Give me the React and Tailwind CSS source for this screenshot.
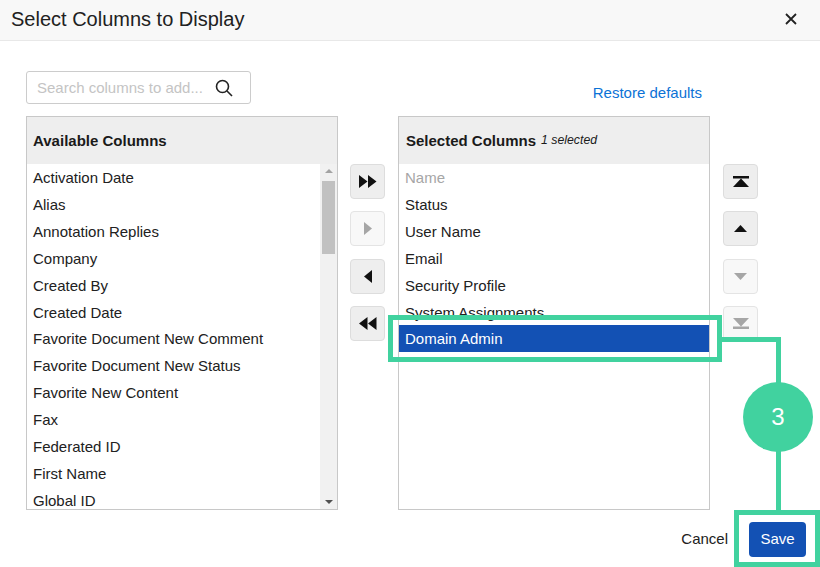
const availableColumns = [
  "Activation Date",
  "Alias",
  "Annotation Replies",
  "Company",
  "Created By",
  "Created Date",
  "Favorite Document New Comment",
  "Favorite Document New Status",
  "Favorite New Content",
  "Fax",
  "Federated ID",
  "First Name",
  "Global ID",
];

const selectedColumns = ["Status", "User Name", "Email", "Security Profile", "System Assignments"];

const icons = {
  addAll: "M0 0 L8.5 6.5 L0 13 Z M9 0 L17.5 6.5 L9 13 Z",
  add: "M0 0 L8 6.5 L0 13 Z",
  remove: "M8 0 L0 6.5 L8 13 Z",
  removeAll: "M8.5 0 L0 6.5 L8.5 13 Z M17.5 0 L9 6.5 L17.5 13 Z",
  top: "M0 0 H16 V2.5 H0 Z M8 2.5 L16 11 H0 Z",
  up: "M6.5 0 L13 7 H0 Z",
  down: "M0 0 H13 L6.5 7 Z",
  bottom: "M0 0 H16 L8 8.5 Z M0 8.5 H16 V11 H0 Z",
};

function MoveButton({ icon, w, h, disabled }) {
  return (
    <button
      className={`flex h-[35px] w-[35px] items-center justify-center rounded border ${
        disabled ? "border-[#e4e4e4] bg-[#f8f8f8]" : "border-[#dddddd] bg-[#eeeeee]"
      }`}
    >
      <svg width={w} height={h} viewBox={`0 0 ${w} ${h}`}>
        <path d={icons[icon]} fill={disabled ? "#a6a6a6" : "#111111"} />
      </svg>
    </button>
  );
}

function PanelHeader({ children, className = "" }) {
  return (
    <div className={`flex h-[47px] items-center bg-[#eeeeee] pt-[2px] text-[15px] font-bold text-[#1a1a1a] ${className}`}>
      {children}
    </div>
  );
}

function Row({ children, className = "" }) {
  return <div className={`flex h-[26.875px] shrink-0 items-center pl-[6px] pt-[2px] ${className}`}>{children}</div>;
}

export default function App() {
  return (
    <div className="relative h-[567px] w-[820px] overflow-hidden bg-white font-['Liberation_Sans',Arial,sans-serif] text-[15px] text-[#212121]">
      {/* header */}
      <div className="flex h-[41px] items-center justify-between border-b border-[#e8e8e8] bg-[#f8f8f8] pb-[3px] pl-[11px] pr-[23px]">
        <h1 className="text-[20px] text-[#212121]">Select Columns to Display</h1>
        <svg width="12" height="12" viewBox="0 0 12 12">
          <path d="M1 1 L11 11 M11 1 L1 11" stroke="#222222" strokeWidth="1.8" fill="none" />
        </svg>
      </div>

      {/* body */}
      <div className="flex pl-[26px] pt-[30px]">
        <div className="w-[312px]">
          <div className="flex h-[33px] w-[225px] items-center rounded-[3px] border border-[#cccccc] pl-[10px] pt-[1px]">
            <span className="w-[178px] text-[#c4c4c4]">Search columns to add...</span>
            <svg className="mb-[1px]" width="18" height="18" viewBox="0 0 18 18" fill="none" stroke="#222222" strokeWidth="1.6">
              <circle cx="7.5" cy="7.5" r="6" />
              <path d="M12 12 L17 17" />
            </svg>
          </div>
          <div className="mt-[12px] h-[394px] overflow-hidden border border-[#c8c8c8]">
            <PanelHeader className="pl-[6px]">Available Columns</PanelHeader>
            <div className="flex h-[345px]">
              <div className="h-full flex-1 overflow-hidden">
                {availableColumns.map((name) => (
                  <Row key={name}>{name}</Row>
                ))}
              </div>
              <div className="flex h-full w-[17px] flex-col items-center justify-between bg-[#f1f1f1] py-[5px]">
                <div className="h-0 w-0 border-x-[4px] border-b-[4px] border-x-transparent border-b-[#a3a3a3]" />
                <div className="mb-auto mt-[8px] h-[73px] w-[13px] bg-[#c1c1c1]" />
                <div className="h-0 w-0 border-x-[4px] border-t-[4px] border-x-transparent border-t-[#505050]" />
              </div>
            </div>
          </div>
        </div>

        <div className="ml-[12px] flex w-[35px] flex-col gap-[12.3px] pt-[93px]">
          <MoveButton icon="addAll" w={18} h={13} />
          <MoveButton icon="add" w={8} h={13} disabled />
          <MoveButton icon="remove" w={8} h={13} />
          <MoveButton icon="removeAll" w={18} h={13} />
        </div>

        <div className="ml-[13px] w-[312px]">
          <div className="flex h-[45px] items-center justify-end pr-[8px] text-[#0b72d6]">Restore defaults</div>
          <div className="h-[394px] overflow-hidden border border-[#c8c8c8]">
            <PanelHeader className="pl-[7px]">
              Selected Columns
              <span className="mb-[3px] ml-[5px] text-[12.3px] font-normal italic">1 selected</span>
            </PanelHeader>
            <div className="flex flex-col">
              <Row className="text-[#a6a6a6]">Name</Row>
              {selectedColumns.map((name) => (
                <Row key={name}>{name}</Row>
              ))}
              <Row className="bg-[#1351b4] text-white">Domain Admin</Row>
            </div>
          </div>
        </div>

        <div className="ml-[13px] flex w-[35px] flex-col gap-[12.3px] pt-[93px]">
          <MoveButton icon="top" w={16} h={11} />
          <MoveButton icon="up" w={13} h={7} />
          <MoveButton icon="down" w={13} h={7} disabled />
          <MoveButton icon="bottom" w={16} h={11} disabled />
        </div>
      </div>

      {/* footer */}
      <div className="flex items-center justify-end gap-[21px] pr-[14px] pt-[12px]">
        <span>Cancel</span>
        <button className="h-[35px] w-[57px] rounded bg-[#1351b4] text-white">Save</button>
      </div>

      {/* green callout over the dialog */}
      <div className="absolute left-[388px] top-[315px] h-[47px] w-[334px] border-[5px] border-[#41d29f]" />
      <div className="absolute left-[722px] top-[337px] h-[5px] w-[59px] bg-[#41d29f]" />
      <div className="absolute left-[776px] top-[337px] h-[175px] w-[5px] bg-[#41d29f]" />
      <div className="absolute left-[743px] top-[382px] flex h-[70px] w-[70px] items-center justify-center rounded-full bg-[#41d29f] text-[24px] text-white">
        3
      </div>
      <div className="absolute left-[734px] top-[510px] h-[57px] w-[86px] border-[5px] border-[#41d29f]" />
    </div>
  );
}
